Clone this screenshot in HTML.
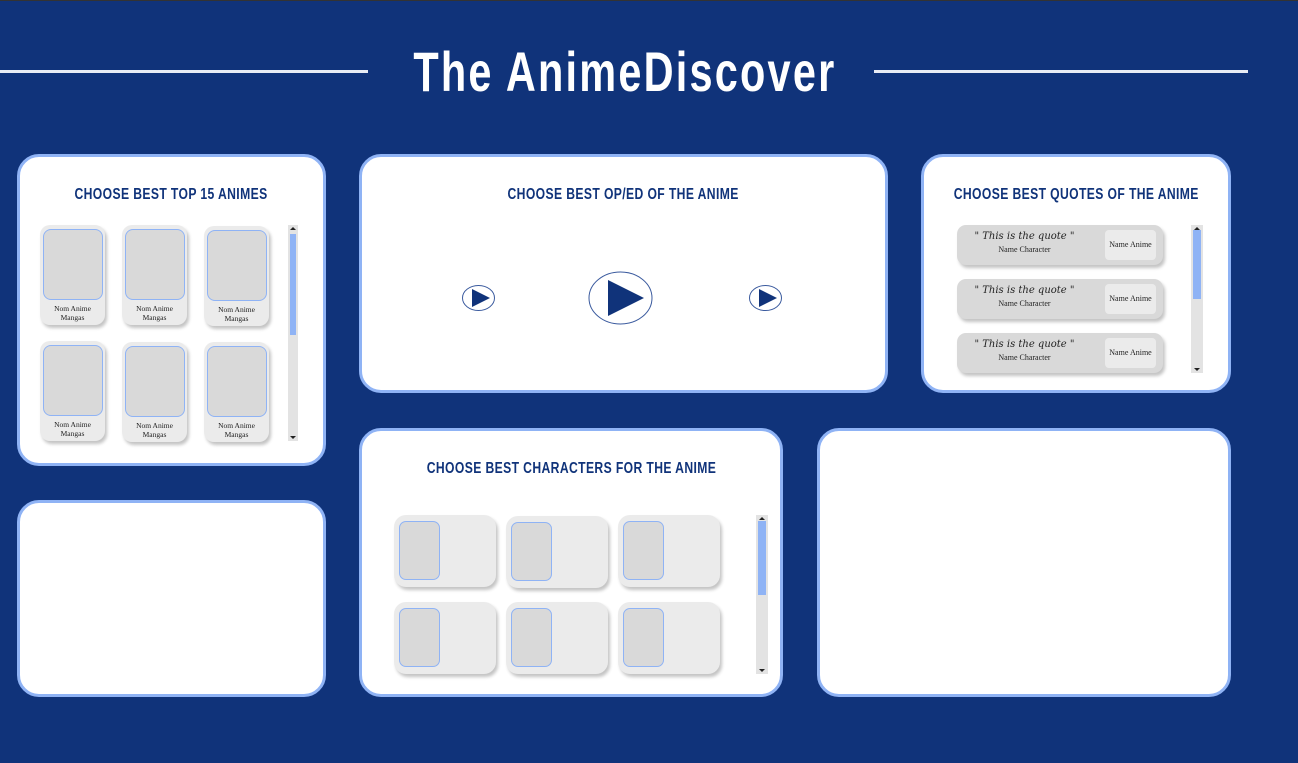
<!DOCTYPE html>
<html><head><meta charset="utf-8"><style>
*{margin:0;padding:0;box-sizing:border-box}
body{width:1298px;height:763px;background:#10337a;position:relative;overflow:hidden;font-family:"Liberation Sans",sans-serif}
.a{position:absolute}
.line{position:absolute;height:3px;background:#e8ecf5;top:70px}
.title{position:absolute;left:0;width:1250px;top:34px;text-align:center;color:#fff;font-size:56px;font-weight:bold;font-family:"Liberation Sans",sans-serif;letter-spacing:3px;line-height:76px;white-space:nowrap}
.title span{display:inline-block;transform:scaleX(.74)}
.p{position:absolute;background:#fff;border:3px solid #8fb3f5;border-radius:22px}
.h{position:absolute;left:-40px;right:-40px;text-align:center;color:#10337a;font-family:"Liberation Sans",sans-serif;font-size:16px;font-weight:bold;letter-spacing:.5px;white-space:nowrap}
.h span{display:inline-block;transform:scaleX(.76)}
.card{position:absolute;width:65px;height:100px;background:#ebebeb;border-radius:10px;box-shadow:2px 3px 3px #c4c4c4}
.card .im{position:absolute;left:3px;top:4px;width:60px;height:71px;background:#d9d9d9;border:1px solid #8fb3f5;border-radius:8px}
.card .t{position:absolute;left:0;right:0;top:79px;text-align:center;font-family:"Liberation Serif",serif;font-size:7.5px;line-height:9px;color:#222}
.sb{position:absolute;background:#e3e3e3}
.sb .th{position:absolute;left:2px;right:2px;background:#8fb3f5}
.sb .u,.sb .d{position:absolute;left:50%;margin-left:-3px;width:0;height:0;border-left:3px solid transparent;border-right:3px solid transparent}
.sb .u{top:2px;border-bottom:3px solid #222}
.sb .d{bottom:2px;border-top:3px solid #222}
.q{position:absolute;left:957px;width:206px;height:40px;background:#d9d9d9;border-radius:9px;box-shadow:2px 3px 3px #c4c4c4}
.q .qt{position:absolute;left:10px;width:115px;top:6px;text-align:center;font-family:"DejaVu Serif",serif;font-style:italic;font-size:10px;color:#222}
.q .nc{position:absolute;left:10px;width:115px;top:20px;text-align:center;font-family:"Liberation Serif",serif;font-size:8px;color:#222}
.q .na{position:absolute;left:148px;top:5px;width:51px;height:30px;background:#ebebeb;border-radius:4px;font-family:"Liberation Serif",serif;font-size:8px;line-height:30px;text-align:center;color:#222}
.ch{position:absolute;width:102px;height:72px;background:#ebebeb;border-radius:12px;box-shadow:2px 3px 3px #c4c4c4}
.ch .im{position:absolute;left:5px;top:6px;width:41px;height:59px;background:#d9d9d9;border:1px solid #8fb3f5;border-radius:7px}
</style></head><body>
<div class="a" style="left:0;top:0;width:1298px;height:1px;background:#333"></div>
<div class="line" style="left:0;width:368px"></div>
<div class="line" style="left:874px;width:374px"></div>
<div class="title"><span>The AnimeDiscover</span></div>

<div class="p" style="left:17px;top:154px;width:309px;height:312px">
<div class="h" style="top:29px"><span>CHOOSE BEST TOP 15 ANIMES</span></div>
</div>
<div class="card" style="left:40px;top:225px"><div class="im"></div><div class="t">Nom Anime<br>Mangas</div></div>
<div class="card" style="left:122px;top:225px"><div class="im"></div><div class="t">Nom Anime<br>Mangas</div></div>
<div class="card" style="left:204px;top:226px"><div class="im"></div><div class="t">Nom Anime<br>Mangas</div></div>
<div class="card" style="left:40px;top:341px"><div class="im"></div><div class="t">Nom Anime<br>Mangas</div></div>
<div class="card" style="left:122px;top:342px"><div class="im"></div><div class="t">Nom Anime<br>Mangas</div></div>
<div class="card" style="left:204px;top:342px"><div class="im"></div><div class="t">Nom Anime<br>Mangas</div></div>
<div class="sb" style="left:288px;top:225px;width:10px;height:216px"><div class="u"></div><div class="th" style="top:9px;height:101px"></div><div class="d"></div></div>

<div class="p" style="left:359px;top:154px;width:529px;height:239px">
<div class="h" style="top:29px"><span>CHOOSE BEST OP/ED OF THE ANIME</span></div>
</div>
<svg class="a" style="left:450px;top:260px" width="350" height="80">
<ellipse cx="28.5" cy="38" rx="16" ry="12.5" fill="#fff" stroke="#3a5a9e" stroke-width="1"/>
<polygon points="22,29 22,47 40,38" fill="#10337a"/>
<ellipse cx="170.5" cy="38" rx="31.5" ry="26" fill="#fff" stroke="#3a5a9e" stroke-width="1"/>
<polygon points="158,20 158,56 194,38" fill="#10337a"/>
<ellipse cx="315.5" cy="38" rx="16" ry="12.5" fill="#fff" stroke="#3a5a9e" stroke-width="1"/>
<polygon points="309,29 309,47 327,38" fill="#10337a"/>
</svg>

<div class="p" style="left:921px;top:154px;width:310px;height:239px">
<div class="h" style="top:29px"><span>CHOOSE BEST QUOTES OF THE ANIME</span></div>
</div>
<div class="q" style="top:225px"><div class="qt">" This is the quote "</div><div class="nc">Name Character</div><div class="na">Name Anime</div></div>
<div class="q" style="top:279px"><div class="qt">" This is the quote "</div><div class="nc">Name Character</div><div class="na">Name Anime</div></div>
<div class="q" style="top:333px"><div class="qt">" This is the quote "</div><div class="nc">Name Character</div><div class="na">Name Anime</div></div>
<div class="sb" style="left:1191px;top:225px;width:12px;height:148px"><div class="u"></div><div class="th" style="top:5px;height:69px"></div><div class="d"></div></div>

<div class="p" style="left:17px;top:500px;width:309px;height:197px"></div>

<div class="p" style="left:359px;top:428px;width:424px;height:269px">
<div class="h" style="top:29px"><span>CHOOSE BEST CHARACTERS FOR THE ANIME</span></div>
</div>
<div class="ch" style="left:394px;top:515px"><div class="im"></div></div>
<div class="ch" style="left:506px;top:516px"><div class="im"></div></div>
<div class="ch" style="left:618px;top:515px"><div class="im"></div></div>
<div class="ch" style="left:394px;top:602px"><div class="im"></div></div>
<div class="ch" style="left:506px;top:602px"><div class="im"></div></div>
<div class="ch" style="left:618px;top:602px"><div class="im"></div></div>
<div class="sb" style="left:756px;top:515px;width:12px;height:159px"><div class="u"></div><div class="th" style="top:6px;height:74px"></div><div class="d"></div></div>

<div class="p" style="left:817px;top:428px;width:414px;height:269px"></div>
</body></html>
